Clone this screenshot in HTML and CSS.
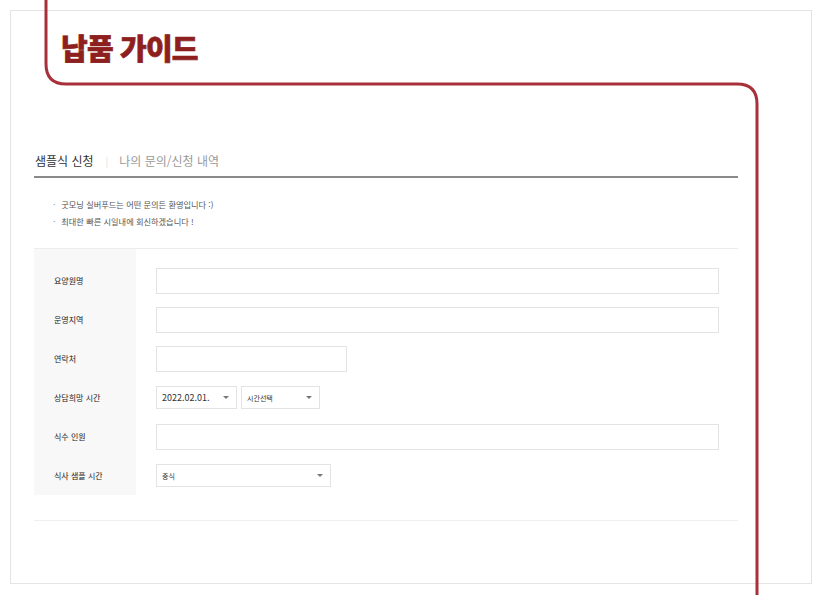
FILE: index.html
```html
<!DOCTYPE html>
<html lang="ko">
<head>
  <meta charset="UTF-8" />
  <meta name="viewport" content="width=device-width, initial-scale=1.0" />
  <title>납품 가이드</title>
  <link rel="stylesheet" href="styles.css">
</head>
<body>
  <div class="page">
    <div class="header">
      <h1 class="title">납품 가이드</h1>
    </div>

    <div class="content">
      <div class="tabs">
        <a class="tab active">샘플식 신청</a>
        <span class="tab-sep">|</span>
        <a class="tab">나의 문의/신청 내역</a>
      </div>

      <ul class="notes">
        <li>굿모닝 실버푸드는 어떤 문의든 환영입니다 :)</li>
        <li>최대한 빠른 시일내에 회신하겠습니다 !</li>
      </ul>

      <form class="apply-form">
        <label class="field-label" for="nursingHome">요양원명</label>
        <div class="field"><input type="text" id="nursingHome" class="input wide" /></div>

        <label class="field-label" for="region">운영지역</label>
        <div class="field"><input type="text" id="region" class="input wide" /></div>

        <label class="field-label" for="phone">연락처</label>
        <div class="field"><input type="text" id="phone" class="input short" /></div>

        <label class="field-label" for="consultDate">상담희망 시간</label>
        <div class="field">
          <span class="select date">
            <select id="consultDate"><option>2022.02.01.</option></select>
          </span>
          <span class="select time">
            <select id="consultTime"><option>시간선택</option></select>
          </span>
        </div>

        <label class="field-label" for="people">식수 인원</label>
        <div class="field"><input type="text" id="people" class="input wide" /></div>

        <label class="field-label" for="mealTime">식사 샘플 시간</label>
        <div class="field">
          <span class="select meal">
            <select id="mealTime"><option>중식</option></select>
          </span>
        </div>
      </form>

      <div class="form-end"></div>
    </div>
  </div>

  <!-- decorative red guide line -->
  <svg class="guide-line" width="822" height="595" viewBox="0 0 822 595">
    <path d="M46 0 V64 Q46 84 66 84 H737 Q757 84 757 104 V595" fill="none" stroke="#a8303a" stroke-width="3" />
  </svg>
</body>
</html>
```

FILE: styles.css
```css
* {
  box-sizing: border-box;
}
body {
  margin: 0;
  background: #fff;
  font-family: "Noto Sans CJK KR", "Noto Sans", sans-serif;
  color: #333;
  position: relative;
  width: 822px;
  height: 595px;
  overflow: hidden;
}
.page {
  margin: 10px;
  height: 574px;
  border: 1px solid #e4e4e4;
}
.header {
  height: 140px;
}
.title {
  margin: 0;
  padding: 19px 0 0 50px;
  font-size: 29px;
  line-height: 35px;
  font-weight: 900;
  letter-spacing: -0.8px;
  color: #8e1f1f;
  -webkit-text-stroke: 0.7px #8e1f1f;
}
.content {
  margin: 0 73px 0 23px;
}

/* tabs */
.tabs {
  display: flex;
  align-items: center;
  height: 27px;
  padding-bottom: 5px;
  border-bottom: 2px solid #8a8a8a;
  font-size: 12px;
  line-height: 20px;
}
.tab {
  color: #999;
  padding-left: 1px;
}
.tab.active {
  color: #333;
}
.tab-sep {
  color: #e2e2e2;
  margin: 0 10px 0 12px;
  font-size: 10px;
}

/* notes */
.notes {
  list-style: none;
  margin: 0;
  padding: 18px 0 18px 19px;
  font-size: 8.2px;
  line-height: 17px;
  color: #555;
}
.notes li::before {
  content: "·";
  color: #888;
  margin-right: 6px;
}

/* form */
.apply-form {
  display: grid;
  grid-template-columns: 102px 1fr;
  grid-auto-rows: 39px;
  padding-top: 12px;
  border-top: 1px solid #ececec;
  background: linear-gradient(to right, #f8f8f8 102px, #fff 102px);
}
.field-label {
  display: flex;
  align-items: center;
  padding-left: 20px;
  font-size: 8px;
  color: #222;
}
.field {
  display: flex;
  align-items: center;
  gap: 4px;
  padding: 0 19px 0 20px;
}
.input {
  height: 26px;
  border: 1px solid #e3e3e3;
  background: #fff;
  font: inherit;
  padding: 0 6px;
}
.input.wide {
  width: 100%;
}
.input.short {
  width: 191px;
}
.select {
  position: relative;
  display: block;
  height: 23px;
}
.select select {
  display: block;
  appearance: none;
  -webkit-appearance: none;
  width: 100%;
  height: 100%;
  border: 1px solid #e3e3e3;
  background: #fff;
  font-family: inherit;
  font-size: 7px;
  color: #333;
  padding: 0 0 0 5px;
  border-radius: 0;
}
.select::after {
  content: "";
  position: absolute;
  right: 8px;
  top: 10px;
  border-left: 3px solid transparent;
  border-right: 3px solid transparent;
  border-top: 3px solid #777;
}
.select.date {
  width: 81px;
}
.select.date select {
  font-size: 9px;
}
.select.time {
  width: 79px;
}
.select.meal {
  width: 175px;
}
.form-end {
  margin-top: 25px;
  border-top: 1px solid #efefef;
}

.guide-line {
  position: absolute;
  left: 0;
  top: 0;
  pointer-events: none;
}
```
